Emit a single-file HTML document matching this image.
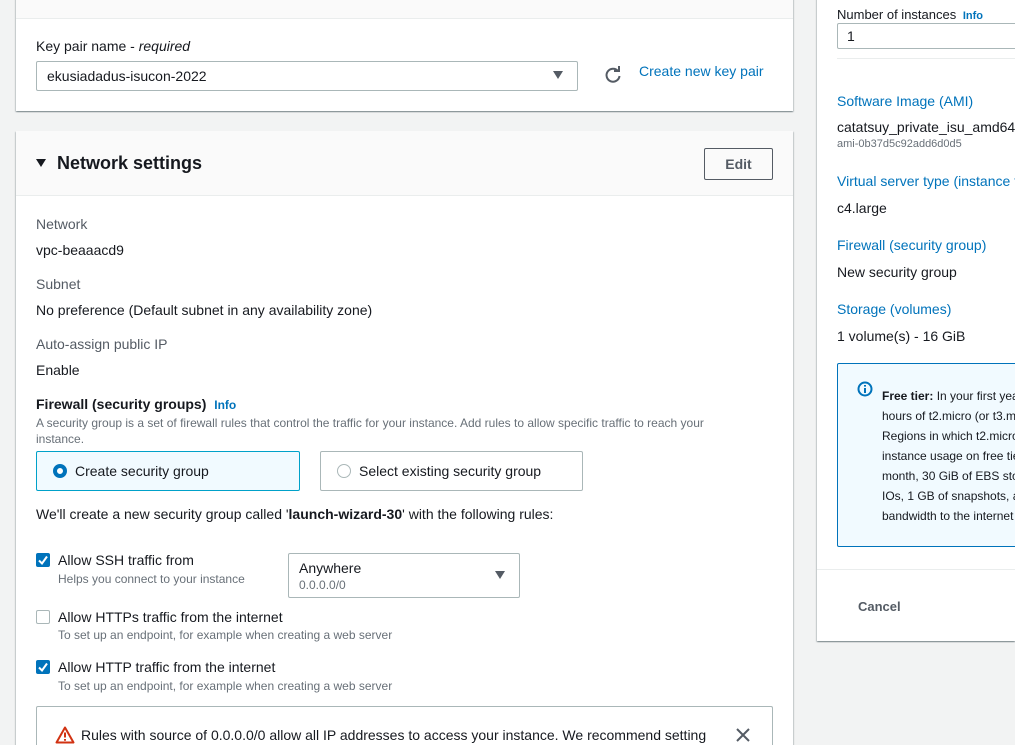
<!DOCTYPE html>
<html style="width:1015px;height:745px;overflow:hidden"><head><meta charset="utf-8"><style>
*{margin:0;padding:0;box-sizing:border-box}
body{width:1015px;height:745px;overflow:hidden;background:#f2f3f3;position:relative;font-family:"Liberation Sans",sans-serif;color:#16191f}
.a{position:absolute;white-space:nowrap}
.n{font-size:14px}
.panel{position:absolute;background:#fff;box-shadow:0 1px 1px rgba(0,28,36,.3),1px 1px 1px rgba(0,28,36,.15),-1px 1px 1px rgba(0,28,36,.15)}
.lab{color:#545b64;font-size:14px}
.val{font-size:14px}
.blue{color:#0073bb}
.small{font-size:12px;color:#687078}
.cb{position:absolute;width:14px;height:14px;border-radius:2px}
.cb.on{background:#0073bb}
.cb.off{border:1px solid #aab7b8;background:#fff}
</style></head><body>

<div class="panel" style="left:16px;top:-2px;width:777px;height:113px">
  <div style="position:absolute;left:0;top:0;width:100%;height:21px;background:#fafafa;border-bottom:1px solid #eaeded"></div>
  <div class="a n" style="left:20px;top:40px">Key pair name - <i>required</i></div>
  <div style="position:absolute;left:20px;top:63px;width:542px;height:30px;border:1px solid #aab7b8;border-radius:2px"></div>
  <div class="a n" style="left:31px;top:70px">ekusiadadus-isucon-2022</div>
  <div class="a" style="left:537px;top:73px;width:0;height:0;border-left:5px solid transparent;border-right:5px solid transparent;border-top:8px solid #545b64"></div>
  <svg class="a" style="left:587px;top:67px" width="20" height="20" viewBox="0 0 20 20"><path d="M15 6 A6.5 6.5 0 1 0 16.5 11" fill="none" stroke="#545b64" stroke-width="2"/><path d="M11 6 L16 6 L16 1" fill="none" stroke="#545b64" stroke-width="2"/></svg>
  <div class="a n blue" style="left:623px;top:65px">Create new key pair</div>
</div>

<div class="panel" style="left:16px;top:131px;width:777px;height:614px">
  <div style="position:absolute;left:0;top:0;width:100%;height:65px;background:#fafafa;border-bottom:1px solid #eaeded"></div>
  <div class="a" style="left:20px;top:28px;width:0;height:0;border-left:5px solid transparent;border-right:5px solid transparent;border-top:8px solid #16191f"></div>
  <div class="a n" style="left:41px;top:22px;font-size:18px;font-weight:bold">Network settings</div>
  <div class="a n" style="left:688px;top:17px;width:69px;height:32px;border:1px solid #545b64;border-radius:2px;text-align:center;line-height:30px;font-weight:bold;color:#545b64">Edit</div>

  <div class="a lab" style="left:20px;top:85px">Network</div>
  <div class="a val" style="left:20px;top:111px">vpc-beaaacd9</div>
  <div class="a lab" style="left:20px;top:145px">Subnet</div>
  <div class="a val" style="left:20px;top:171px">No preference (Default subnet in any availability zone)</div>
  <div class="a lab" style="left:20px;top:205px">Auto-assign public IP</div>
  <div class="a val" style="left:20px;top:231px">Enable</div>

  <div class="a n" style="left:20px;top:265px;font-weight:bold">Firewall (security groups) <span class="blue" style="font-size:12px;margin-left:4px">Info</span></div>
  <div class="a" style="left:20px;top:284px;font-size:12px;color:#687078;white-space:normal;width:700px;line-height:16px">A security group is a set of firewall rules that control the traffic for your instance. Add rules to allow specific traffic to reach your instance.</div>

  <div style="position:absolute;left:20px;top:320px;width:264px;height:40px;border:1px solid #00a1c9;background:#f1faff;border-radius:2px"></div>
  <div class="a" style="left:37px;top:333px;width:14px;height:14px;border-radius:50%;border:4px solid #0073bb;background:#fff"></div>
  <div class="a n" style="left:59px;top:332px">Create security group</div>
  <div style="position:absolute;left:304px;top:320px;width:263px;height:40px;border:1px solid #aab7b8;border-radius:2px"></div>
  <div class="a" style="left:321px;top:333px;width:14px;height:14px;border-radius:50%;border:1px solid #aab7b8"></div>
  <div class="a n" style="left:343px;top:332px">Select existing security group</div>

  <div class="a n" style="left:20px;top:375px">We'll create a new security group called '<b>launch-wizard-30</b>' with the following rules:</div>

  <div class="cb on" style="left:20px;top:422px"></div>
  <svg class="a" style="left:20px;top:422px" width="14" height="14"><path d="M3 7.5 L6 10.5 L11 3.5" fill="none" stroke="#fff" stroke-width="2"/></svg>
  <div class="a n" style="left:42px;top:421px">Allow SSH traffic from</div>
  <div class="a small" style="left:42px;top:441px">Helps you connect to your instance</div>
  <div style="position:absolute;left:272px;top:422px;width:232px;height:45px;border:1px solid #aab7b8;border-radius:2px"></div>
  <div class="a n" style="left:283px;top:429px">Anywhere</div>
  <div class="a small" style="left:283px;top:447px">0.0.0.0/0</div>
  <div class="a" style="left:479px;top:440px;width:0;height:0;border-left:5px solid transparent;border-right:5px solid transparent;border-top:8px solid #545b64"></div>

  <div class="cb off" style="left:20px;top:479px"></div>
  <div class="a n" style="left:42px;top:478px">Allow HTTPs traffic from the internet</div>
  <div class="a small" style="left:42px;top:497px">To set up an endpoint, for example when creating a web server</div>

  <div class="cb on" style="left:20px;top:529px"></div>
  <svg class="a" style="left:20px;top:529px" width="14" height="14"><path d="M3 7.5 L6 10.5 L11 3.5" fill="none" stroke="#fff" stroke-width="2"/></svg>
  <div class="a n" style="left:42px;top:528px">Allow HTTP traffic from the internet</div>
  <div class="a small" style="left:42px;top:548px">To set up an endpoint, for example when creating a web server</div>

  <div style="position:absolute;left:20px;top:575px;width:737px;height:39px;border:1px solid #aab7b8;border-bottom:none;border-radius:2px 2px 0 0"></div>
  <svg class="a" style="left:39px;top:595px" width="20" height="18" viewBox="0 0 20 18"><path d="M10 1.5 L18.5 16.5 L1.5 16.5 Z" fill="none" stroke="#d13212" stroke-width="2" stroke-linejoin="round"/><path d="M10 6.5 V11.5 M10 13 V14.8" stroke="#d13212" stroke-width="2"/></svg>
  <div class="a n" style="left:65px;top:596px">Rules with source of 0.0.0.0/0 allow all IP addresses to access your instance. We recommend setting</div>
  <svg class="a" style="left:720px;top:597px" width="14" height="14"><path d="M1 1 L13 13 M13 1 L1 13" stroke="#545b64" stroke-width="2"/></svg>
</div>

<div class="panel" style="left:817px;top:-2px;width:198px;height:643px;overflow:hidden">
  <div class="a" style="left:20px;top:9px;font-size:13px;color:#16191f">Number of instances <span class="blue" style="font-size:11px;font-weight:bold;margin-left:3px">Info</span></div>
  <div style="position:absolute;left:20px;top:25px;width:220px;height:26px;border:1px solid #aab7b8;border-radius:2px"></div>
  <div class="a" style="left:30px;top:30px;font-size:14px">1</div>
  <div style="position:absolute;left:20px;top:60px;width:200px;height:1px;background:#eaeded"></div>
  <div class="a blue" style="left:20px;top:95px;font-size:14px">Software Image (AMI)</div>
  <div class="a" style="left:20px;top:121px;font-size:14px">catatsuy_private_isu_amd64</div>
  <div class="a" style="left:20px;top:140px;font-size:11px;color:#687078">ami-0b37d5c92add6d0d5</div>
  <div class="a blue" style="left:20px;top:175px;font-size:14px">Virtual server type (instance type)</div>
  <div class="a" style="left:20px;top:202px;font-size:14px">c4.large</div>
  <div class="a blue" style="left:20px;top:239px;font-size:14px">Firewall (security group)</div>
  <div class="a" style="left:20px;top:266px;font-size:14px">New security group</div>
  <div class="a blue" style="left:20px;top:303px;font-size:14px">Storage (volumes)</div>
  <div class="a" style="left:20px;top:330px;font-size:14px">1 volume(s) - 16 GiB</div>
  <div style="position:absolute;left:20px;top:365px;width:220px;height:184px;border:1px solid #0073bb;background:#f1faff;border-radius:2px"></div>
  <svg class="a" style="left:40px;top:383px" width="16" height="16" viewBox="0 0 16 16"><circle cx="8" cy="8" r="6.5" fill="none" stroke="#0073bb" stroke-width="2"/><path d="M8 7 V12 M8 4 V5.6" stroke="#0073bb" stroke-width="2"/></svg>
  <div class="a" style="left:65px;top:388px;font-size:12px;line-height:20px;color:#16191f"><b>Free tier:</b> In your first year<br>hours of t2.micro (or t3.micro<br>Regions in which t2.micro<br>instance usage on free tier<br>month, 30 GiB of EBS storage<br>IOs, 1 GB of snapshots, and<br>bandwidth to the internet</div>
  <div style="position:absolute;left:0;top:571px;width:220px;height:1px;background:#eaeded"></div>
  <div class="a" style="left:41px;top:601px;font-size:13px;font-weight:bold;color:#545b64">Cancel</div>
</div>
</body></html>
